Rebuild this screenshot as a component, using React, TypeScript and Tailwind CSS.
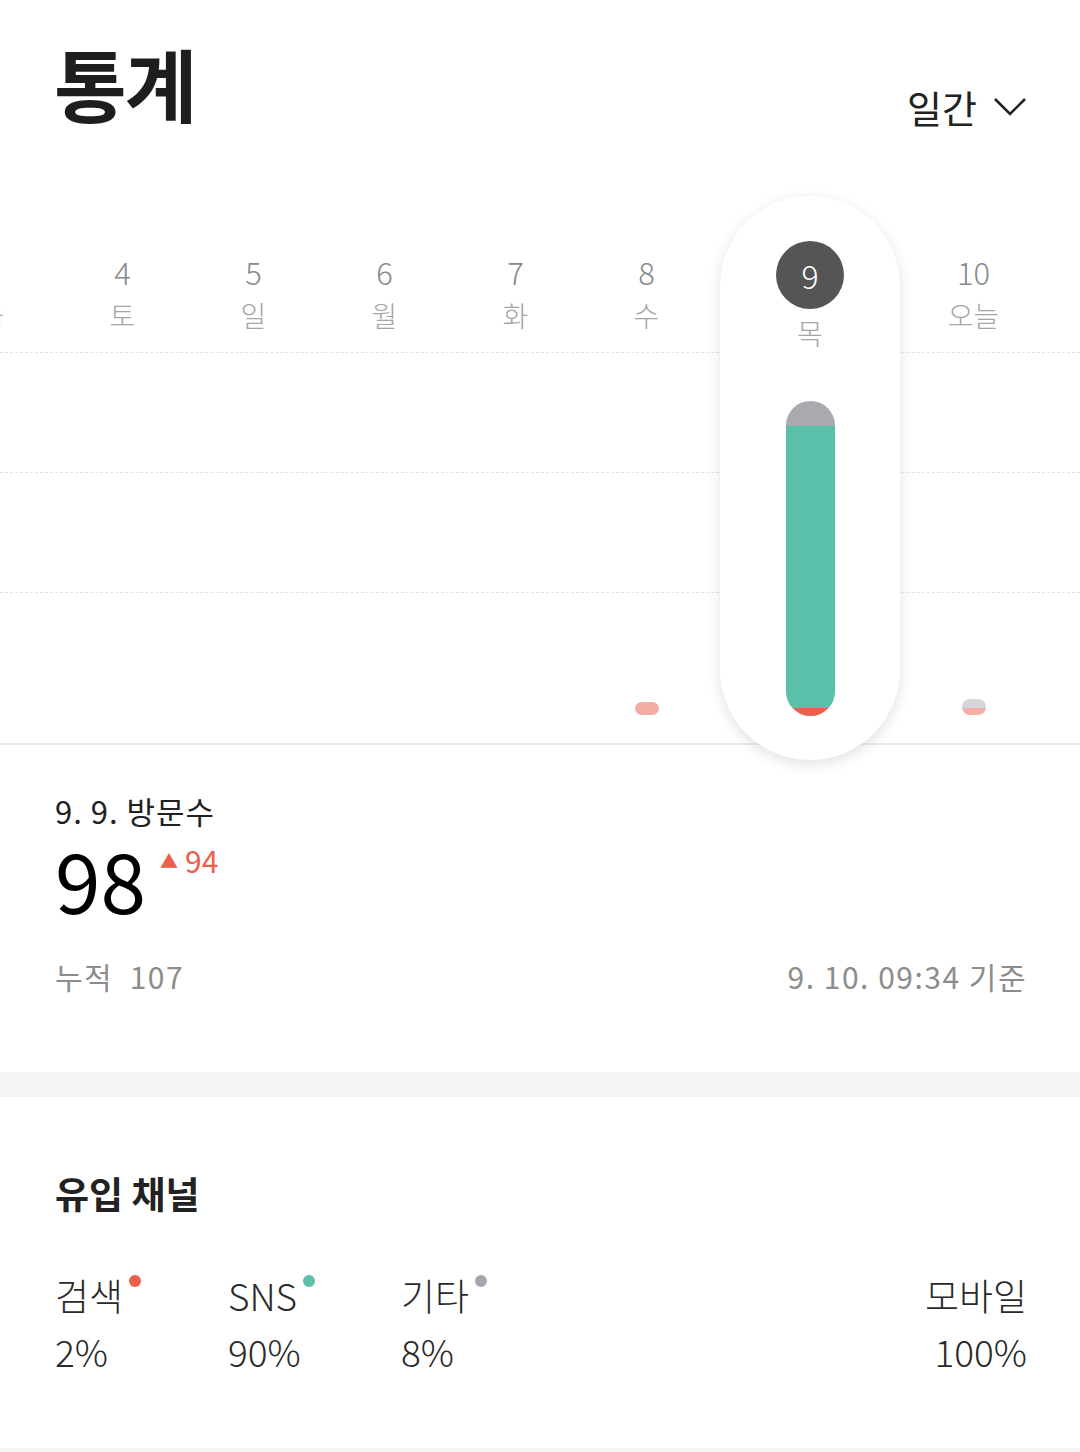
import React from 'react';

type Day = { num: string; label: string; bar?: 'pink' | 'mixed' };

const days: Day[] = [
  { num: '3', label: '금' },
  { num: '4', label: '토' },
  { num: '5', label: '일' },
  { num: '6', label: '월' },
  { num: '7', label: '화' },
  { num: '8', label: '수', bar: 'pink' },
];

const channels = [
  { name: '검색', value: '2%', dot: 'bg-[#ec5f4b]' },
  { name: 'SNS', value: '90%', dot: 'bg-[#5bc0a9]' },
  { name: '기타', value: '8%', dot: 'bg-[#a3a8b0]' },
];

const DayColumn: React.FC<{ day: Day }> = ({ day }) => (
  <div className="w-[131px] shrink-0 flex flex-col items-center pt-[58px] pb-[28px]">
    <span className="text-[31px] leading-[36px] font-light text-[#8a8a8a]">{day.num}</span>
    <span className="mt-[7px] text-[28px] leading-[36px] font-light text-[#a5a5a5]">{day.label}</span>
    <div className="flex-1" />
    {day.bar === 'pink' && <div className="w-[24px] h-[13px] rounded-full bg-[#f4aea5]" />}
    {day.bar === 'mixed' && (
      <div className="w-[24px] h-[16px] rounded-full overflow-hidden flex flex-col">
        <div className="h-[9px] bg-[#d5d6d9]" />
        <div className="flex-1 bg-[#f4aea5]" />
      </div>
    )}
  </div>
);

export default function App() {
  return (
    <div className="w-[1080px] h-[1452px] bg-white overflow-hidden font-['Noto_Sans_CJK_KR','Noto_Sans',sans-serif] text-[#222]">
      {/* header */}
      <div className="flex items-end justify-between px-[54px] pr-[53px] pt-[30px] h-[196px] pb-[63px]">
        <h1 className="text-[79px] leading-[100px] font-bold text-[#1e1e1e] tracking-[-2px]">통계</h1>
        <button className="flex items-center gap-[16px] pb-[2px]">
          <span className="text-[38px] leading-[48px] text-[#222]">일간</span>
          <svg width="34" height="20" viewBox="0 0 34 20" fill="none" stroke="#222" strokeWidth="2.6">
            <path d="M2 2l15 15L32 2" />
          </svg>
        </button>
      </div>

      {/* chart */}
      <div className="relative h-[549px] border-b-2 border-[#ececec]">
        <div className="absolute inset-0 flex flex-col pt-[156px]">
          <div className="h-[120px] border-t border-dashed border-[#e3e3e3]" />
          <div className="h-[120px] border-t border-dashed border-[#e3e3e3]" />
          <div className="h-[120px] border-t border-dashed border-[#e3e3e3]" />
        </div>
        <div className="relative flex h-full ml-[-74px]">
          {days.map((d) => (
            <DayColumn key={d.num} day={d} />
          ))}
          <div className="w-[196px] shrink-0 px-[8px]">
            <div className="relative z-10 h-[564px] rounded-[90px] bg-white shadow-[0_4px_14px_rgba(0,0,0,0.12)] flex flex-col items-center pt-[45px] pb-[44px]">
              <div className="w-[68px] h-[68px] rounded-full bg-[#555555] flex items-center justify-center">
                <span className="text-[32px] leading-none font-light text-white">9</span>
              </div>
              <span className="mt-[6px] text-[28px] leading-[36px] font-light text-[#a5a5a5]">목</span>
              <div className="flex-1" />
              <div className="w-[49px] h-[315px] rounded-full overflow-hidden flex flex-col">
                <div className="h-[25px] bg-[#a8aaaf]" />
                <div className="flex-1 bg-[#5bc0a9]" />
                <div className="h-[8px] bg-[#ec5f4b]" />
              </div>
            </div>
          </div>
          <DayColumn day={{ num: '10', label: '오늘', bar: 'mixed' }} />
        </div>
      </div>

      {/* visits */}
      <div className="px-[55px] pr-[53px] pt-[46px] h-[327px]">
        <div className="text-[31px] leading-[40px] text-[#222] tracking-[1px]">9. 9. 방문수</div>
        <div className="flex items-start mt-[8px]">
          <span className="text-[82px] leading-[80px] text-black">98</span>
          <span className="ml-[14px] mt-[6px] flex items-center gap-[7px] text-[#ec5f4b]">
            <span className="text-[18px] leading-none">▲</span>
            <span className="text-[30px] leading-[30px]">94</span>
          </span>
        </div>
        <div className="flex justify-between mt-[37px] text-[30px] leading-[40px] text-[#8c8c8c] tracking-[1.5px]">
          <span>누적&nbsp; 107</span>
          <span>9. 10. 09:34 기준</span>
        </div>
      </div>

      <div className="h-[25px] bg-[#f5f5f5]" />

      {/* channels */}
      <div className="px-[55px] pr-[53px] pt-[72px] h-[351px]">
        <h2 className="text-[37px] leading-[48px] font-bold text-[#222]">유입 채널</h2>
        <div className="flex mt-[54px]">
          {channels.map((c) => (
            <div key={c.name} className="w-[173px] flex flex-col">
              <div className="flex items-start">
                <span className="text-[37px] leading-[48px] font-light text-[#2a2a2a]">{c.name}</span>
                <span className={`ml-[6px] mt-[4px] w-[12px] h-[12px] rounded-full ${c.dot}`} />
              </div>
              <span className="mt-[8px] text-[37px] leading-[48px] font-light text-[#2a2a2a]">{c.value}</span>
            </div>
          ))}
          <div className="ml-auto flex flex-col items-end">
            <span className="text-[37px] leading-[48px] font-light text-[#2a2a2a]">모바일</span>
            <span className="mt-[8px] text-[37px] leading-[48px] font-light text-[#2a2a2a]">100%</span>
          </div>
        </div>
      </div>

      <div className="h-[10px] bg-[#f5f5f5]" />
    </div>
  );
}
